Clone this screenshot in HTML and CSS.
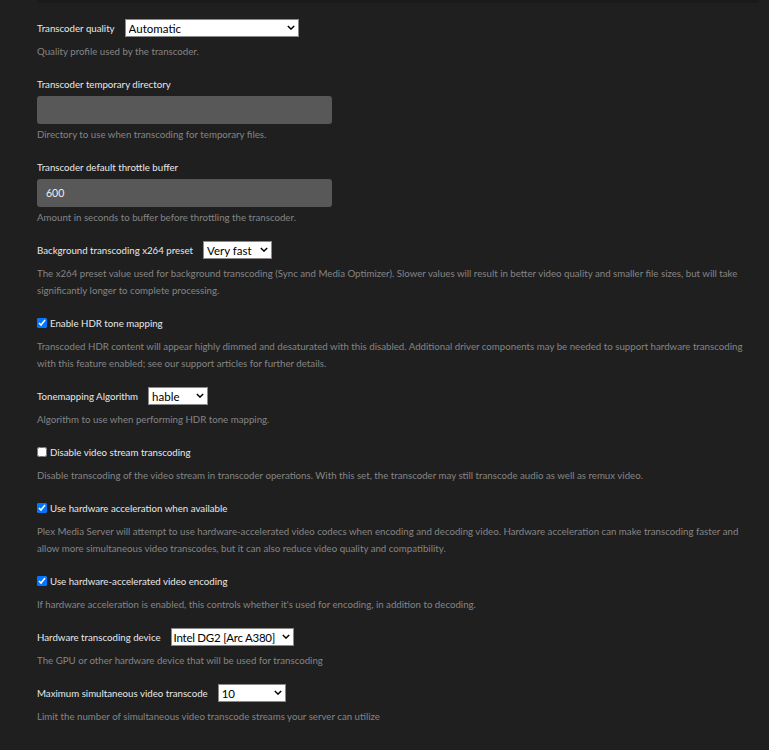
FILE: index.html
```html
<!DOCTYPE html>
<html lang="en">
<head>
    <meta charset="UTF-8">
    <meta name="viewport" content="width=device-width, initial-scale=1.0">
    <title>Transcoder Settings</title>
    <link rel="stylesheet" href="styles.css">
</head>
<body>
    <div class="top-bar"></div>

    <div class="settings">
        <div class="setting">
            <div class="row">
                <label for="quality">Transcoder quality</label>
                <span class="select-wrap">
                    <select id="quality" class="w-quality">
                        <option>Automatic</option>
                        <option>Prefer higher speed encoding</option>
                        <option>Prefer higher quality encoding</option>
                        <option>Make my CPU hurt</option>
                    </select>
                    <svg class="chevron" viewBox="0 0 10 6"><path d="M1 1 L5 5 L9 1"/></svg>
                </span>
            </div>
            <p class="hint">Quality profile used by the transcoder.</p>
        </div>

        <div class="setting">
            <div class="row">
                <label for="tempDir">Transcoder temporary directory</label>
            </div>
            <input type="text" id="tempDir" class="text-input">
            <p class="hint hint-input">Directory to use when transcoding for temporary files.</p>
        </div>

        <div class="setting">
            <div class="row">
                <label for="throttle">Transcoder default throttle buffer</label>
            </div>
            <input type="text" id="throttle" class="text-input" value="600">
            <p class="hint hint-input">Amount in seconds to buffer before throttling the transcoder.</p>
        </div>

        <div class="setting">
            <div class="row">
                <label for="preset">Background transcoding x264 preset</label>
                <span class="select-wrap">
                    <select id="preset" class="w-preset">
                        <option>Very fast</option>
                        <option>Faster</option>
                        <option>Fast</option>
                        <option>Medium</option>
                        <option>Slow</option>
                    </select>
                    <svg class="chevron" viewBox="0 0 10 6"><path d="M1 1 L5 5 L9 1"/></svg>
                </span>
            </div>
            <p class="hint">The x264 preset value used for background transcoding (Sync and Media Optimizer). Slower values will result in better video quality and smaller file sizes, but will take significantly longer to complete processing.</p>
        </div>

        <div class="setting">
            <div class="row">
                <input type="checkbox" id="hdr" class="check" checked>
                <label for="hdr">Enable HDR tone mapping</label>
            </div>
            <p class="hint">Transcoded HDR content will appear highly dimmed and desaturated with this disabled. Additional driver components may be needed to support hardware transcoding with this feature enabled; see our support articles for further details.</p>
        </div>

        <div class="setting">
            <div class="row">
                <label for="algo">Tonemapping Algorithm</label>
                <span class="select-wrap">
                    <select id="algo" class="w-algo">
                        <option>hable</option>
                        <option>mobius</option>
                        <option>reinhard</option>
                        <option>clip</option>
                    </select>
                    <svg class="chevron" viewBox="0 0 10 6"><path d="M1 1 L5 5 L9 1"/></svg>
                </span>
            </div>
            <p class="hint">Algorithm to use when performing HDR tone mapping.</p>
        </div>

        <div class="setting">
            <div class="row">
                <input type="checkbox" id="disableVideo" class="check">
                <label for="disableVideo">Disable video stream transcoding</label>
            </div>
            <p class="hint">Disable transcoding of the video stream in transcoder operations. With this set, the transcoder may still transcode audio as well as remux video.</p>
        </div>

        <div class="setting">
            <div class="row">
                <input type="checkbox" id="hwAccel" class="check" checked>
                <label for="hwAccel">Use hardware acceleration when available</label>
            </div>
            <p class="hint">Plex Media Server will attempt to use hardware-accelerated video codecs when encoding and decoding video. Hardware acceleration can make transcoding faster and allow more simultaneous video transcodes, but it can also reduce video quality and compatibility.</p>
        </div>

        <div class="setting">
            <div class="row">
                <input type="checkbox" id="hwEncode" class="check" checked>
                <label for="hwEncode">Use hardware-accelerated video encoding</label>
            </div>
            <p class="hint">If hardware acceleration is enabled, this controls whether it's used for encoding, in addition to decoding.</p>
        </div>

        <div class="setting">
            <div class="row">
                <label for="device">Hardware transcoding device</label>
                <span class="select-wrap">
                    <select id="device" class="w-device">
                        <option>Intel DG2 [Arc A380]</option>
                        <option>Auto</option>
                    </select>
                    <svg class="chevron" viewBox="0 0 10 6"><path d="M1 1 L5 5 L9 1"/></svg>
                </span>
            </div>
            <p class="hint">The GPU or other hardware device that will be used for transcoding</p>
        </div>

        <div class="setting">
            <div class="row">
                <label for="maxTranscode">Maximum simultaneous video transcode</label>
                <span class="select-wrap">
                    <select id="maxTranscode" class="w-max">
                        <option>10</option>
                        <option>Unlimited</option>
                    </select>
                    <svg class="chevron" viewBox="0 0 10 6"><path d="M1 1 L5 5 L9 1"/></svg>
                </span>
            </div>
            <p class="hint">Limit the number of simultaneous video transcode streams your server can utilize</p>
        </div>
    </div>
</body>
</html>
```

FILE: styles.css
```css
body {
    margin: 0;
    background-color: #1f1f1f;
    font-family: Lato, "Open Sans", sans-serif;
    font-size: 9.7px;
    color: #e6e6e6;
}

.top-bar {
    height: 3px;
    margin-left: 37px;
    width: 722px;
    background-color: #1a1a1a;
}

.settings {
    padding: 16px 0 0 37px;
    width: 722px;
}

.setting {
    margin-bottom: 15px;
}

.row {
    display: flex;
    align-items: center;
    height: 18px;
}

.row label {
    color: #e8e8e8;
}

.select-wrap {
    position: relative;
    margin-left: 10px;
    display: inline-flex;
}

select {
    appearance: none;
    -webkit-appearance: none;
    height: 18px;
    padding: 0 0 0 3px;
    border: 1px solid #8a8a8a;
    border-radius: 0;
    background-color: #fff;
    color: #000;
    font-family: Lato, "Open Sans", sans-serif;
    font-size: 11.5px;
    outline: none;
}

.w-quality { width: 174px; }
.w-preset { width: 69px; }
.w-algo { width: 60px; }
.w-device { width: 123px; padding-left: 2px; letter-spacing: -0.25px; }
.w-max { width: 68px; }

.chevron {
    position: absolute;
    right: 4px;
    top: 6px;
    width: 8px;
    height: 5px;
    fill: none;
    stroke: #000;
    stroke-width: 1.8;
    pointer-events: none;
}

.check {
    width: 10px;
    height: 10px;
    margin: 0 3px 0 0;
    accent-color: #0075ff;
}

.text-input {
    display: block;
    box-sizing: border-box;
    width: 295px;
    height: 28px;
    margin-top: 3px;
    padding: 0 9px;
    border: none;
    border-radius: 3px;
    background-color: #585858;
    color: #eee;
    font-family: Lato, "Open Sans", sans-serif;
    font-size: 10.5px;
    outline: none;
}

.hint {
    margin: 6px 0 0 0;
    line-height: 17px;
    color: #858585;
}

.hint-input {
    margin-top: 2px;
}
```
